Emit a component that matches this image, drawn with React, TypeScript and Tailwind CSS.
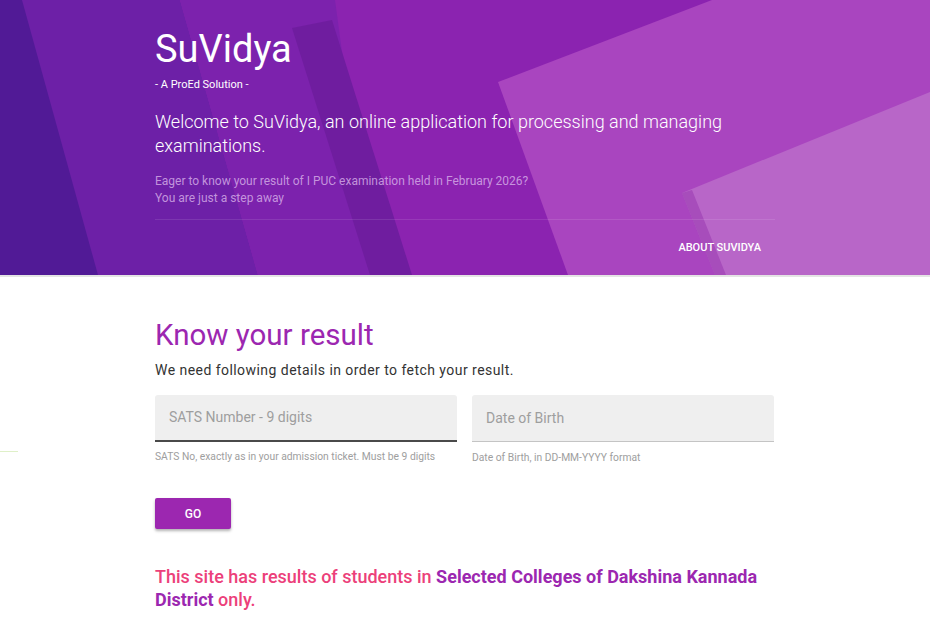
import React from "react";

function HeaderArt() {
  return (
    <svg
      className="absolute inset-0 h-full w-full"
      viewBox="0 0 930 275"
      preserveAspectRatio="none"
    >
      <rect width="930" height="275" fill="#8b23b0" />
      <polygon points="0,0 180,0 258,275 0,275" fill="#6d20a7" />
      <polygon points="180,0 335,0 372,275 258,275" fill="#7c22ad" />
      <polygon points="292,28 332,20 412,275 370,275" fill="#6f1d9f" />
      <polygon points="0,0 22,0 98,275 0,275" fill="#511a96" />
      <polygon points="498,82 712,0 930,0 930,275 568,275" fill="#a945bf" />
      <polygon points="682,193 930,92 930,275 715,275" fill="#b866c8" />
      <polygon points="682,193 692,190 726,275 715,275" fill="#9b3cb3" opacity="0.6" />
    </svg>
  );
}

export default function App() {
  return (
    <div className="min-h-[620px] w-full bg-white" style={{ fontFamily: "Roboto, 'Liberation Sans', sans-serif" }}>
      <header className="relative h-[277px] overflow-hidden border-b-2 border-[#e4e4e4]">
        <HeaderArt />
        <div className="relative mx-auto w-[620px] pt-[25px]">
          <h1 className="text-[38px] leading-[48px] font-normal text-white">SuVidya</h1>
          <p className="mt-[5px] text-[11px] leading-[14px] text-white">- A ProEd Solution -</p>
          <p className="mt-[18px] text-[18px] leading-[24px] font-light text-white">
            Welcome to SuVidya, an online application for processing and managing examinations.
          </p>
          <p className="mt-[15px] text-[12px] leading-[17px] text-[#d9b3ea]/80">
            Eager to know your result of I PUC examination held in February 2026?
            <br />
            You are just a step away
          </p>
          <div className="mt-[12px] h-px w-full bg-white/10" />
          <div className="flex justify-end pr-[14px] pt-[21px]">
            <a className="text-[11px] font-medium uppercase leading-[14px] text-white">About SuVidya</a>
          </div>
        </div>
      </header>

      <div className="relative">
        <div className="absolute left-0 top-[174px] h-px w-[18px] bg-[#dff0c8]" />
      </div>

      <main className="mx-auto w-[620px] pt-[41px]">
        <h2 className="text-[29.5px] leading-[34px] font-normal text-[#9c27b0]">Know your result</h2>
        <p className="mt-[9px] text-[14px] leading-[18px] tracking-[0.45px] text-[#333]">
          We need following details in order to fetch your result.
        </p>

        <div className="mt-[16px] flex gap-[15px]">
          <div className="w-[302px]">
            <div className="flex h-[47px] items-center rounded-t-[3px] border-b-2 border-[#4a4a4a] bg-[#efefef] px-[14px]">
              <span className="text-[14px] text-[#9e9e9e]">SATS Number - 9 digits</span>
            </div>
            <p className="mt-[9px] text-[10.3px] leading-[12px] text-[#9e9e9e]">
              SATS No, exactly as in your admission ticket. Must be 9 digits
            </p>
          </div>
          <div className="w-[302px]">
            <div className="flex h-[47px] items-center rounded-t-[3px] border-b border-[#c4c4c4] bg-[#efefef] px-[14px]">
              <span className="text-[14px] text-[#9e9e9e]">Date of Birth</span>
            </div>
            <p className="mt-[10px] text-[10.3px] leading-[12px] text-[#9e9e9e]">
              Date of Birth, in DD-MM-YYYY format
            </p>
          </div>
        </div>

        <button className="mt-[34px] flex h-[31px] w-[76px] items-center justify-center rounded-[2px] bg-[#9c27b0] text-[12px] font-medium text-white shadow-[0_2px_3px_rgba(0,0,0,0.3)]">
          GO
        </button>

        <p className="mt-[36px] text-[18px] leading-[23px] font-medium text-[#ec407a]">
          This site has results of students in{" "}
          <span className="font-bold text-[#9c27b0]">Selected Colleges of Dakshina Kannada District</span> only.
        </p>
      </main>
    </div>
  );
}
